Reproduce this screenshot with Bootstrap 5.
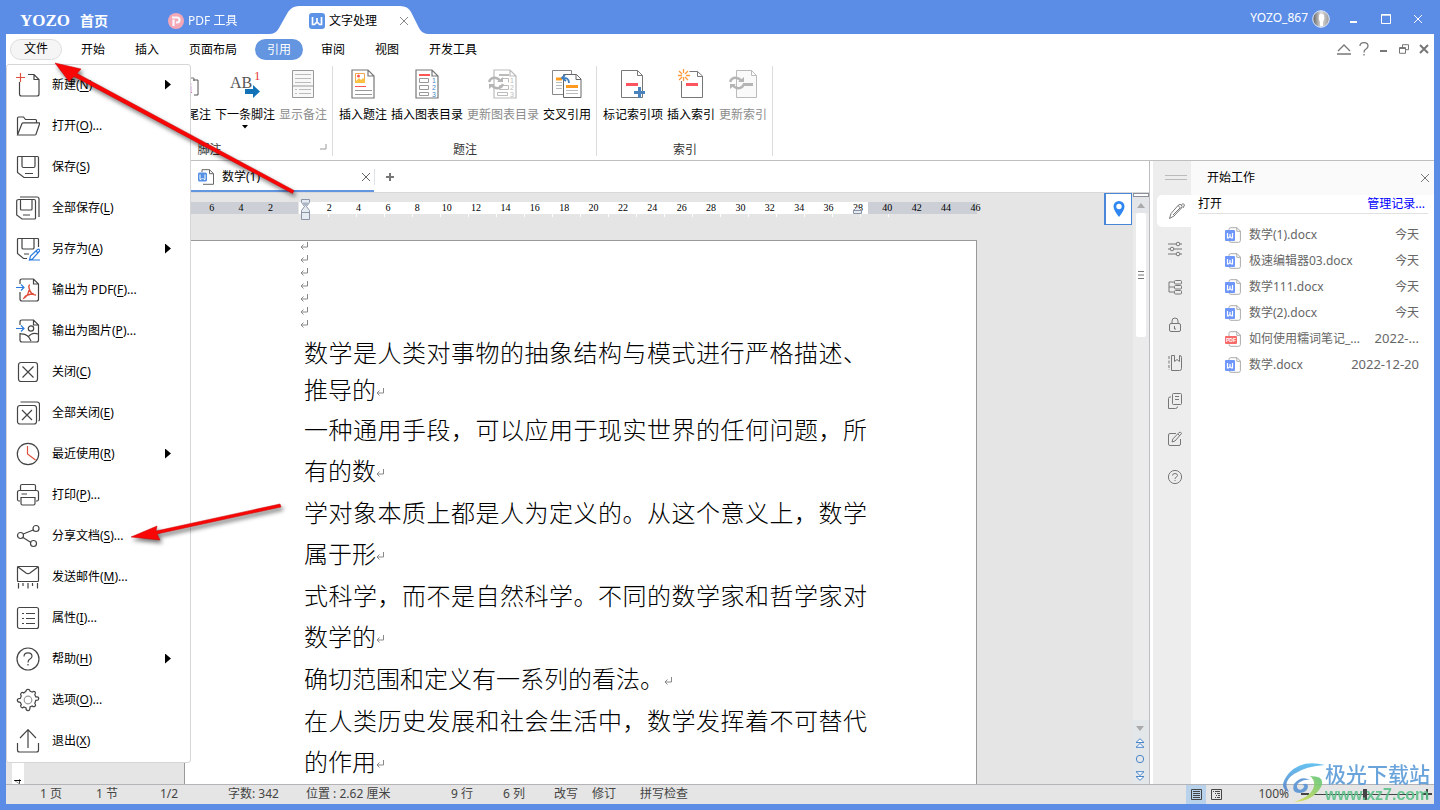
<!DOCTYPE html>
<html lang="zh-CN">
<head>
<meta charset="utf-8">
<meta name="viewport" content="width=device-width, initial-scale=1">
<title>文字处理 - YOZO</title>
<link rel="stylesheet" href="https://cdn.jsdelivr.net/npm/bootstrap@5.3.0/dist/css/bootstrap.min.css">
<script src="https://cdn.jsdelivr.net/npm/bootstrap@5.3.0/dist/js/bootstrap.bundle.min.js"></script>
<style>
  :root { --frame: #5c8de6; --accent: #6495e0; --canvas: #e5e5e5; }
  body { font: 12px/16px "Noto Sans", "Noto Sans CJK SC", sans-serif; color: #000; background: var(--frame); }
  button { font: inherit; color: inherit; background: none; border: 0; padding: 0; white-space: nowrap; }
  svg { display: block; flex: none; fill: none; stroke: currentColor; }
  .app-window { height: 100vh; padding: 0 6px 6px; }

  /* title bar */
  .title-bar { height: 34px; color: #fff; }
  .logo-text { font: bold 17px/28px "Liberation Serif", serif; margin: 7px 10px 0 14px; }
  .home-link { font-size: 14px; margin-top: 7px; width: 88px; text-align: left; }
  .pdf-link { margin-top: 7px; width: 115px; opacity: .95; }
  .app-tab { width: 140px; padding: 7px 14px 0 26px; color: #000; z-index: 0; }
  .app-tab > .tab-shape { position: absolute; left: -15px; top: 0; z-index: -1; }
  .win-btn { width: 32px; height: 34px; }
  .user-name { padding-top: 2px; }

  /* main menu */
  .menu-bar { height: 30px; padding-left: 4px; }
  .menu-tab { height: 21px; padding: 1px 12px 0; border-radius: 11px; margin-right: 6px; }
  .menu-tab.file-tab { padding: 0 13px; margin-right: 7px; background: #f5f5f5; border: 1px solid #ddd; }
  .menu-tab.current { background: var(--accent); color: #fff; }
  .tool-btn { width: 20px; height: 28px; color: #777; }

  /* ribbon */
  .ribbon { height: 97px; padding-top: 2px; border-bottom: 1px solid #bfbfbf; }
  .ribbon-group { height: 90px; border-right: 1px solid #dcdcdc; padding: 0 5px 0 6px; }
  .ribbon-group.notes { margin-left: 80px; width: 247px; }
  .ribbon-btn svg { margin: 3px auto 8px; }
  .ribbon-btn .drop-caret { margin: 2px auto 0; }
  .ribbon-btn:disabled { color: #8c8c8c; }
  .group-label { height: 12px; line-height: 12px; color: #333; }

  /* document tabs */
  .doc-tabs { height: 32px; border-bottom: 1px solid #d8d8d8; }
  .doc-tab { width: 368px; height: 31px; padding: 2px 3px 0 192px; border-bottom: 2px solid var(--accent); }
  .new-tab { padding-left: 11px; }
  .doc-area { background: var(--canvas); border-right: 1px solid #bdbdc1; }

  /* rulers and page */
  .ruler { width: 793px; height: 12px; margin: 9px 0 0 178px; background: #fff; font: 10px/12px "Liberation Serif", serif; }
  .ruler-margin { width: 109px; background: #cccfd6; }
  .ruler-margin.start { width: 115px; border-right: 1px solid var(--canvas); }
  .ruler-scale { position: absolute; inset: 0 -13px 0 13px; }
  .ruler-scale > span { flex: 1 1 0; text-align: center; }
  .indent-mark { position: absolute; top: -3px; left: 117px; }
  .indent-mark.end { left: 669px; top: 3px; }
  .ruler-ticks { height: 3px; width: 562px; margin: 0 0 23px 322px; background: repeating-linear-gradient(90deg, #fff 0 1px, transparent 1px 28px); }
  .v-ruler { width: 12px; margin: 0 160px 0 6px; background: #fff; font: 10px/12px "Liberation Serif", serif; }
  .v-ruler > span { writing-mode: vertical-rl; transform: rotate(180deg); }
  .sheet { width: 793px; background: #fff; border: 1px solid #999; border-bottom: 0; padding-left: 115px; overflow: hidden; }
  .blank-line { height: 13px; padding-top: 1px; }
  .doc-body { padding: 1px 0 0 4px; width: 567px; font: 300 24px/41px "Noto Sans CJK SC", sans-serif; }
  .doc-body p { margin: 0 0 1px; text-align: justify; }
  .doc-body p.first-para { line-height: 37px; }
  .doc-body svg { display: inline-block; }
  .pin-btn { width: 28px; height: 32px; background: #fff; border: 1px solid #4a86d8; border-left-width: 2px; margin-right: 1px; }
  .v-scroll { width: 16px; background: #ebebeb; }
  .split-box { height: 4px; border: 1px solid #8b8f99; background: #fff; }
  .scroll-end { height: 16px; background: #e3e5e9; }
  .scroll-thumb { height: 124px; width: 10px; background: #fff; border-radius: 2px; color: #777; }
  .browse-btns { background: #e4e7ea; height: 64px; padding: 5px 2px 3px 0; color: #4a86c8; }

  /* task pane */
  .pane-rail { width: 38px; margin-left: 3px; background: #ededed; color: #777; }
  .rail-grip { height: 34px; padding-left: 8px; }
  .rail-btn { height: 32px; margin: 0 0 6px 4px; padding-left: 1px; }
  .rail-btn.current { background: #fff; border-radius: 5px 0 0 5px; }
  .task-pane { width: 243px; background: #fff; }
  .pane-head { height: 34px; padding: 0 4px 0 16px; background: #fafafa; }
  .open-head { height: 19px; margin: 0 6px 8px 7px; border-bottom: 1px solid #e2e2e2; }
  .open-head a { color: #00f; text-decoration: none; padding-right: 3px; }
  .file-row { height: 26px; color: #666; text-decoration: none; padding: 0 15px 0 34px; }
  .file-row .full-date { font-size: 13px; line-height: 15px; padding-bottom: 1px; }

  /* status bar */
  .status-bar { height: 20px; background: var(--canvas); border-top: 1px solid #b3b3b8; color: #444; padding: 0 2px 1px 34px; }
  .view-btn { width: 20px; height: 19px; }
  .view-btn.current { background: #b8d2ec; }
  .zoom-range { appearance: none; width: 102px; height: 12px; margin: 0 6px 0 5px; background: linear-gradient(#444, #444) center / 100% 1px no-repeat; }
  .zoom-range::-webkit-slider-thumb { appearance: none; width: 4px; height: 11px; background: #444; }

  /* overlays */
  .file-menu { position: absolute; left: 6px; top: 64px; width: 185px; background: #fff; border: 1px solid #d6d6d6; border-radius: 3px; z-index: 5; }
  .file-menu button { height: 41px; padding: 0 19px 2px 9px; gap: 12px; }
  .file-menu svg { color: #444; stroke-width: 1.2; }
  .file-menu .fly { width: 6px; height: 10px; background: #000; clip-path: polygon(0 0, 100% 50%, 0 100%); }
  .file-menu u { text-underline-offset: 2px; }
  .guide-arrows { position: absolute; left: 0; top: 0; z-index: 6; pointer-events: none; filter: drop-shadow(2px 3px 2px rgba(0,0,0,.55)); }
  .site-stamp { position: absolute; right: 10px; bottom: 5px; z-index: 6; pointer-events: none; opacity: .9; }
  .stamp-name { font: 500 21px/24px "Noto Sans CJK SC", sans-serif; color: #5b9bd8; }
  .stamp-url { font: bold 16px/20px "Liberation Sans", sans-serif; color: #5dc08a; }
</style>
</head>
<body>
<svg width="0" height="0" class="position-absolute" aria-hidden="true">
  <symbol id="i-return" viewBox="0 0 8 8"><path d="M7.500 0v5H1M3.500 2.500 1 5l2.500 2.500" stroke="#888"/></symbol>
  <symbol id="i-close" viewBox="0 0 10 10"><path d="m1 1 8 8M9 1 1 9"/></symbol>
  <symbol id="i-page" viewBox="0 0 24 30"><path d="M1 1h16l6 6v22H1zM17 1v6h6" fill="#fff" stroke-width="1.2"/></symbol>
  <symbol id="i-doc" viewBox="0 0 16 16"><path d="M4 4V2.500Q4 .7 5.800.7H12l3.400 3.400v9.400q0 1.800-1.800 1.800H6q-2 0-2-2M11.800.7v3.600h3.600" stroke="#aaa"/><rect x="0" y="3" width="10" height="11" rx="1" fill="#6f96fa" stroke="none"/><path d="M2.500 6v5h1L5 9.500 6.500 11h1V6M5 7v3" stroke="#fff" stroke-width="1.200"/></symbol>
  <symbol id="i-sync" viewBox="0 0 16 14"><path d="M1 6Q3 1 8 2q3 .5 4 3M15 8q-2 5-7 4-3-.5-4-3" stroke="#b5b5b5" stroke-width="2.400"/><path d="M9 6h6V1zM7 8H1v5z" fill="#b5b5b5" stroke="none"/></symbol>
</svg>

<div class="app-window d-flex flex-column position-relative">

  <header class="title-bar d-flex">
    <div class="logo-text">YOZO</div>
    <button class="home-link fw-bold">首页</button>
    <button class="pdf-link d-flex align-items-center gap-1">
      <svg width="16" height="16" viewBox="0 0 16 16"><circle cx="8" cy="8" r="8" fill="#ffa9b4" stroke="none"/><path d="M5.500 6.500V13M4 4.500h5a2.500 2.500 0 0 1 0 5H8" stroke="#fff" stroke-width="2.200"/></svg>
      PDF 工具</button>
    <div class="app-tab position-relative d-flex align-items-center">
      <svg class="tab-shape" width="162" height="34" viewBox="0 0 162 34"><path d="M1 34Q8 34 11 28L20 12Q24 6 31 6H132Q140 6 143 12L151 28Q154 34 161 34z" fill="#fff" stroke="none"/></svg>
      <svg class="me-1" width="16" height="16" viewBox="0 0 16 16"><rect width="16" height="16" rx="3" fill="#5c93e6" stroke="none"/><path d="M3.500 4v7.500h2L8 9l2.500 2.500h2V4M8 5v5" stroke="#fff" stroke-width="1.700"/></svg>
      文字处理
      <button class="ms-auto" aria-label="关闭标签" style="color:#888"><svg width="10" height="10"><use href="#i-close"/></svg></button>
    </div>
    <div class="ms-auto d-flex align-items-center">
      <span class="user-name me-1">YOZO_867</span>
      <svg class="mt-1" width="18" height="18" viewBox="0 0 18 18"><defs><linearGradient id="av"><stop offset=".1" stop-color="#777"/><stop offset=".5" stop-color="#ddd"/><stop offset="1" stop-color="#999"/></linearGradient></defs><circle cx="9" cy="9" r="8.300" fill="url(#av)" stroke="#dbe6fb"/><path d="M7 5q2-3 5 0 1 4-1 7v4H8v-4Q6 9 7 5z" fill="#fff" stroke="none"/></svg>
      <div class="d-flex ps-2">
        <button class="win-btn d-flex justify-content-center align-items-center pt-1" aria-label="最小化"><svg width="12" height="12" viewBox="0 0 12 12"><path d="M2 9h7" stroke-width="2"/></svg></button>
        <button class="win-btn d-flex justify-content-center align-items-center pt-1" aria-label="最大化"><svg width="12" height="12" viewBox="0 0 12 12"><path d="M1.500 1.500h9v9h-9zM1 2.200h10"/></svg></button>
        <button class="win-btn d-flex justify-content-center align-items-center pt-1" aria-label="关闭"><svg width="10" height="10"><use href="#i-close"/></svg></button>
      </div>
    </div>
  </header>

  <nav class="menu-bar bg-white d-flex align-items-center">
    <button class="menu-tab file-tab">文件</button>
    <button class="menu-tab">开始</button>
    <button class="menu-tab">插入</button>
    <button class="menu-tab">页面布局</button>
    <button class="menu-tab current">引用</button>
    <button class="menu-tab">审阅</button>
    <button class="menu-tab">视图</button>
    <button class="menu-tab">开发工具</button>
    <div class="ms-auto d-flex">
      <button class="tool-btn d-flex justify-content-center align-items-center" aria-label="折叠功能区"><svg width="16" height="14" viewBox="0 0 16 14"><path d="M2 9 8 3l6 6M1 12h14" stroke-width="1.300"/></svg></button>
      <button class="tool-btn d-flex justify-content-center align-items-center" aria-label="帮助"><svg width="10" height="14" viewBox="0 0 10 14"><path d="M1 4q0-3.300 4-3.300T9 4q0 1.800-2 3Q5 8 5 10.500M5 12v1.500" stroke-width="1.300"/></svg></button>
      <button class="tool-btn d-flex justify-content-center align-items-center" aria-label="最小化文档"><svg width="10" height="12" viewBox="0 0 10 12"><path d="M1 8h7" stroke-width="2"/></svg></button>
      <button class="tool-btn d-flex justify-content-center align-items-center" aria-label="还原文档"><svg width="10" height="10" viewBox="0 0 10 10"><path d="M3.500 3V.7h6v5H7M.5 3.500h6v5.800h-6zM.5 4.500h6"/></svg></button>
      <button class="tool-btn d-flex justify-content-center align-items-center" aria-label="关闭文档"><svg width="10" height="10" stroke-width="2"><use href="#i-close"/></svg></button>
    </div>
  </nav>

  <section class="ribbon bg-white d-flex">
    <div class="ribbon-group notes d-flex flex-column">
      <div class="d-flex justify-content-end align-items-start gap-1 flex-grow-1">
        <button class="ribbon-btn"><svg width="32" height="30" viewBox="0 0 32 30"><path d="M14 5h5v4h4v3" stroke="#777"/><path d="M22 11h5v15h-4" stroke="#555"/><text x="17" y="24" font-family="Liberation Serif" font-size="15" font-weight="bold" fill="#e03a3a" stroke="none">i</text></svg>插入尾注</button>
        <button class="ribbon-btn"><svg width="32" height="30" viewBox="0 0 32 30"><text x="1" y="19" font-family="Liberation Serif" font-size="16" fill="#555" stroke="none">AB</text><text x="25" y="11" font-family="Liberation Serif" font-size="13" fill="#e83c3c" stroke="none">1</text><path d="M16 20h8v-4l7 6.500-7 6.500v-4h-8z" fill="#1272b8" stroke="none"/></svg>下一条脚注<svg class="drop-caret" width="6" height="4" viewBox="0 0 6 4"><path d="M0 0h6L3 3.500z" fill="#000" stroke="none"/></svg></button>
        <button class="ribbon-btn" disabled><svg width="24" height="30" viewBox="0 0 24 30"><path d="M1.500 1.500h21v27h-21zM1.500 17h21" fill="#f8f8f8" stroke="#999"/><path d="M4 5.500h16M4 9.500h16M4 13.500h16M4 20.500h2m2 0h12M4 24.500h2m2 0h12" stroke="#bbb"/></svg>显示备注</button>
      </div>
      <div class="group-label text-center position-relative">脚注<svg class="position-absolute end-0 top-0" width="8" height="6" viewBox="0 0 8 6"><path d="M1 5h6V0" stroke="#999"/></svg></div>
    </div>
    <div class="ribbon-group d-flex flex-column">
      <div class="d-flex align-items-start gap-1 flex-grow-1">
        <button class="ribbon-btn"><svg width="24" height="30" viewBox="0 0 24 30"><use href="#i-page" color="#777"/><path d="M4.500 4.500h9v9h-9z" stroke="#f0a850"/><path d="m4 13 4-4 2 2 2-2 2 2v3H4z" fill="#fbc142" stroke="none"/><circle cx="7.500" cy="7" r="1.500" fill="#f55" stroke="none"/><path d="M4 17.500h11" stroke="#f55"/><path d="M4 21.500h17M4 25.500h17" stroke="#999"/></svg>插入题注</button>
        <button class="ribbon-btn"><svg width="24" height="30" viewBox="0 0 24 30"><use href="#i-page" color="#777"/><path d="M4 6h11" stroke="#f55" stroke-width="2"/><path d="M4.500 9.500h9v4h-9zM4.500 16.500h9v4h-9zM4.500 23.500h9v3h-9z" stroke="#999"/><g font-family="Liberation Sans" font-size="7" fill="#4a8ac8" stroke="none"><text x="17" y="14">1</text><text x="17" y="21">2</text><text x="17" y="28">3</text></g></svg>插入图表目录</button>
        <button class="ribbon-btn" disabled><svg width="32" height="30" viewBox="0 0 32 30"><g transform="translate(6 0)"><use href="#i-page" width="24" height="30" color="#bbb"/><path d="M6 6h10" stroke="#bbb" stroke-width="2"/><path d="M8.500 9.500h7v4M6.500 16.500h9v4h-9zM4.500 23.500h10v3h-10z" stroke="#bbb"/><g font-family="Liberation Sans" font-size="7" fill="#bbb" stroke="none"><text x="17" y="14">1</text><text x="17" y="21">2</text><text x="17" y="28">3</text></g></g><use href="#i-sync" x="1" y="7" width="16" height="14"/></svg>更新图表目录</button>
        <button class="ribbon-btn"><svg width="32" height="30" viewBox="0 0 32 30"><path d="M1.500 1.500h19v24h-19z" fill="#fff" stroke="#888"/><path d="M5 10h6" stroke="#ff9a1c" stroke-width="3"/><path d="M5 13.500h6M5 16.500h6M5 19.500h6" stroke="#bbb"/><path d="M12.500 5.500h13l4.500 4.500v18.500H12.500zM25 5.500v5h5" fill="#fff" stroke="#666"/><path d="M15 17.500h12" stroke="#ff9a1c" stroke-width="3"/><path d="M15 21.500h12M15 24.500h12" stroke="#bbb"/><path d="M11 9q7-1 7 5M14 6l-3 3 4 3" stroke="#3f7fc0" stroke-width="1.800"/></svg>交叉引用</button>
      </div>
      <div class="group-label text-center">题注</div>
    </div>
    <div class="ribbon-group d-flex flex-column">
      <div class="d-flex align-items-start gap-1 flex-grow-1">
        <button class="ribbon-btn"><svg width="26" height="30" viewBox="0 0 26 30"><path d="M1.500 1.500h16l5 5v22h-21zM17.500 1.500v5h5" fill="#fff" stroke="#777"/><path d="M6 15.500h12" stroke="#fc5560" stroke-width="3"/><path d="M14 23.500h11M19.500 18v11" stroke="#4a82bd" stroke-width="3"/></svg>标记索引项</button>
        <button class="ribbon-btn"><svg width="28" height="30" viewBox="0 0 28 30"><path d="M4.500 12v16.500h21V7l-5-4.500h-8M20.500 2.500v5h5" stroke="#777"/><path d="M9 15.500h12" stroke="#fc5560" stroke-width="3"/><path d="M6.500 0v4m0 4v4M1 6.500h4m4 0h4M2 2l3 3m3 3 3 3M11 2 8 5M5 8l-3 3" stroke="#ff9a3c" stroke-width="1.300"/></svg>插入索引</button>
        <button class="ribbon-btn" disabled><svg width="28" height="30" viewBox="0 0 28 30"><path d="M7.500 1.500h15l5 5v22h-20zM22.500 1.500v5h5" fill="#fafafa" stroke="#bbb"/><path d="M14 15.500h10" stroke="#b5b5b5" stroke-width="3"/><use href="#i-sync" x="0" y="7" width="16" height="14"/></svg>更新索引</button>
      </div>
      <div class="group-label text-center">索引</div>
    </div>
  </section>

  <main class="d-flex flex-grow-1 bg-white overflow-hidden">
    <div class="doc-area d-flex flex-column flex-grow-1 overflow-hidden">
      <div class="doc-tabs d-flex align-items-center bg-white">
        <div class="doc-tab d-flex align-items-center">
          <svg class="me-2" width="16" height="16" viewBox="0 0 16 16"><path d="M4 3V.7h7.500l4 4v10.600H5M11.500.7v4h4" stroke="#666"/><rect y="3.500" width="9" height="9" rx="1.500" fill="#5590e4" stroke="none"/><path d="M2 5.500v5h1L4.500 9 6 10.500h1v-5" stroke="#fff"/></svg>
          数学(1)
          <button class="ms-auto" aria-label="关闭文档标签" style="color:#666"><svg width="10" height="10"><use href="#i-close"/></svg></button>
        </div>
        <button class="new-tab border-start" aria-label="新建标签"><svg width="8" height="16" viewBox="0 0 8 16"><path d="M0 8h8M4 4v8" stroke="#777" stroke-width="2"/></svg></button>
      </div>
      <div class="d-flex flex-grow-1 overflow-hidden">
        <div class="d-flex flex-column flex-grow-1 overflow-hidden">
          <div class="ruler position-relative d-flex flex-shrink-0 justify-content-between">
            <div class="ruler-margin start"></div>
            <div class="ruler-margin"></div>
            <div class="ruler-scale d-flex"><span>6</span><span>4</span><span>2</span><span></span><span>2</span><span>4</span><span>6</span><span>8</span><span>10</span><span>12</span><span>14</span><span>16</span><span>18</span><span>20</span><span>22</span><span>24</span><span>26</span><span>28</span><span>30</span><span>32</span><span>34</span><span>36</span><span>38</span><span>40</span><span>42</span><span>44</span><span>46</span></div>
            <svg class="indent-mark" width="10" height="22" viewBox="0 0 10 22"><path d="M.5.500h8v3l-3 4 3 4v9h-8v-9l3-4-3-4zM.5 13.500h8" fill="#e6ebf2" stroke="#8a94a6"/><path d="M1 3.500h7l-3.500 4z" fill="#aab4c4" stroke="none"/></svg>
            <svg class="indent-mark end" width="10" height="9" viewBox="0 0 10 9"><path d="M.5 8.500v-3l4-4 4 4v3zM.5 5.500h8" fill="#e6ebf2" stroke="#8a94a6"/></svg>
          </div>
          <div class="ruler-ticks flex-shrink-0"></div>
          <div class="d-flex flex-grow-1 overflow-hidden">
            <div class="v-ruler flex-shrink-0 d-flex align-items-end"><span>4</span></div>
            <article class="sheet flex-shrink-0">
              <div class="blank-line"><svg width="8" height="8"><use href="#i-return"/></svg></div>
              <div class="blank-line"><svg width="8" height="8"><use href="#i-return"/></svg></div>
              <div class="blank-line"><svg width="8" height="8"><use href="#i-return"/></svg></div>
              <div class="blank-line"><svg width="8" height="8"><use href="#i-return"/></svg></div>
              <div class="blank-line"><svg width="8" height="8"><use href="#i-return"/></svg></div>
              <div class="blank-line"><svg width="8" height="8"><use href="#i-return"/></svg></div>
              <div class="blank-line"><svg width="8" height="8"><use href="#i-return"/></svg></div>
              <div class="doc-body">
                <p class="first-para">数学是人类对事物的抽象结构与模式进行严格描述、推导的<svg width="8" height="8"><use href="#i-return"/></svg></p>
                <p>一种通用手段，可以应用于现实世界的任何问题，所有的数<svg width="8" height="8"><use href="#i-return"/></svg></p>
                <p>学对象本质上都是人为定义的。从这个意义上，数学属于形<svg width="8" height="8"><use href="#i-return"/></svg></p>
                <p>式科学，而不是自然科学。不同的数学家和哲学家对数学的<svg width="8" height="8"><use href="#i-return"/></svg></p>
                <p>确切范围和定义有一系列的看法。<svg width="8" height="8"><use href="#i-return"/></svg></p>
                <p>在人类历史发展和社会生活中，数学发挥着不可替代的作用<svg width="8" height="8"><use href="#i-return"/></svg></p>
              </div>
            </article>
          </div>
        </div>
        <button class="pin-btn flex-shrink-0 d-flex justify-content-center align-items-center" aria-label="定位"><svg width="12" height="16" viewBox="0 0 12 16"><path d="M6 0a5.500 5.500 0 0 1 5.500 5.500Q11.500 9 6 16 .5 9 .5 5.500A5.500 5.500 0 0 1 6 0z" fill="#2f86f0" stroke="none"/><circle cx="6" cy="5.500" r="2.700" fill="#fff" stroke="none"/></svg></button>
        <div class="v-scroll flex-shrink-0 d-flex flex-column align-items-stretch">
          <div class="split-box"></div>
          <div class="scroll-end d-flex justify-content-center align-items-center"><svg width="8" height="5" viewBox="0 0 8 5"><path d="M0 5h8L4 0z" fill="#aaa" stroke="none"/></svg></div>
          <div class="scroll-thumb mx-auto d-flex justify-content-center align-items-center"><svg width="6" height="8" viewBox="0 0 6 8"><path d="M0 .5h6M0 4h6M0 7.500h6"/></svg></div>
          <div class="browse-btns mt-auto d-flex flex-column align-items-center justify-content-between">
            <svg width="8" height="6" viewBox="0 0 8 6"><path d="M0 1h8L4 6z" fill="#aaa" stroke="none"/></svg>
            <svg width="10" height="10" viewBox="0 0 10 10"><path d="M1 4.500 5 .7l4 3.800zM1 9.300l4-3.800 4 3.800z" fill="#fff"/></svg>
            <svg width="10" height="10" viewBox="0 0 10 10"><circle cx="5" cy="5" r="3.700"/></svg>
            <svg width="10" height="10" viewBox="0 0 10 10"><path d="m1 .7 4 3.800L9 .7zM1 5.500l4 3.800 4-3.800z" fill="#fff"/></svg>
          </div>
        </div>
      </div>
    </div>

    <nav class="pane-rail flex-shrink-0 d-flex flex-column">
      <div class="rail-grip d-flex justify-content-center align-items-center"><svg width="22" height="6" viewBox="0 0 22 6"><path d="M0 .5h22M0 4.500h22" stroke="#bbb"/></svg></div>
      <button class="rail-btn current d-flex justify-content-center align-items-center" aria-label="开始工作"><svg class="ms-1" width="18" height="18" viewBox="0 0 18 18"><path d="m1.500 16.500 1.500-5 7-8q2-2 3.500-.5t-.5 3.500l-7 7.500zM10 3.500l3 3M5 13l7-7M13.500 3l1.500-1.500 1.500 1.500-1.500 3" /></svg></button>
      <button class="rail-btn d-flex justify-content-center align-items-center" aria-label="属性设置"><svg width="16" height="16" viewBox="0 0 16 16"><path d="M1 3h8m4 0h2M1 8h2m4 0h8M1 13h8m4 0h2"/><circle cx="11" cy="3" r="1.800"/><circle cx="5" cy="8" r="1.800"/><circle cx="11" cy="13" r="1.800"/></svg></button>
      <button class="rail-btn d-flex justify-content-center align-items-center" aria-label="结构"><svg width="16" height="16" viewBox="0 0 16 16"><rect x="7.500" y="1.500" width="7" height="3.500" rx="1"/><rect x="7.500" y="6.500" width="7" height="3.500" rx="1"/><rect x="7.500" y="11.500" width="7" height="3.500" rx="1"/><path d="M7 3H2v10h5M2 8h5"/></svg></button>
      <button class="rail-btn d-flex justify-content-center align-items-center" aria-label="保护"><svg width="16" height="16" viewBox="0 0 16 16"><rect x="2.500" y="6.500" width="11" height="8" rx="1.500"/><path d="M5 6V4q0-3 3-3t3 3v2M7.500 9v3H9"/></svg></button>
      <button class="rail-btn d-flex justify-content-center align-items-center" aria-label="书签"><svg width="16" height="18" viewBox="0 0 16 18"><path d="M2 2v14" stroke-dasharray="3 1.500"/><path d="M7.500 1.500h-3v15h8q2 0 2-2v-11q0-2-2-2M7.500 1.500v6l2.500-2 2.500 2v-6"/></svg></button>
      <button class="rail-btn d-flex justify-content-center align-items-center" aria-label="剪贴板"><svg width="16" height="18" viewBox="0 0 16 18"><rect x="5.500" y="1.500" width="9" height="11" rx="1"/><path d="M8 4.500h4M8 7.500h4M4 5H3q-1.500 0-1.500 1.500v10h7q2 0 2-2"/></svg></button>
      <button class="rail-btn d-flex justify-content-center align-items-center" aria-label="编辑"><svg width="16" height="16" viewBox="0 0 16 16"><path d="M9 2.500H3Q1.500 2.500 1.500 4v9q0 1.500 1.500 1.500h9q1.500 0 1.500-1.500V8M5 11l.8-3L12 1.500q2-1 2.500 1L8 10zM11 3l2 2"/></svg></button>
      <button class="rail-btn d-flex justify-content-center align-items-center" aria-label="帮助面板"><svg width="16" height="16" viewBox="0 0 16 16"><circle cx="8" cy="8" r="6.600"/><path d="M5.500 6.500q0-2 2.500-2t2.500 2q0 1-1.500 1.700-1 .5-1 1.800M8 11v1"/></svg></button>
    </nav>

    <aside class="task-pane flex-shrink-0">
      <div class="pane-head d-flex align-items-center justify-content-between">开始工作
        <button aria-label="关闭面板" style="color:#777"><svg width="10" height="10"><use href="#i-close"/></svg></button></div>
      <div class="open-head d-flex align-items-center justify-content-between"><span>打开</span><a href="#">管理记录...</a></div>
      <a href="#" class="file-row d-flex align-items-center gap-2"><svg width="16" height="16"><use href="#i-doc"/></svg><span>数学(1).docx</span><span class="ms-auto">今天</span></a>
      <a href="#" class="file-row d-flex align-items-center gap-2"><svg width="16" height="16"><use href="#i-doc"/></svg><span>极速编辑器03.docx</span><span class="ms-auto">今天</span></a>
      <a href="#" class="file-row d-flex align-items-center gap-2"><svg width="16" height="16"><use href="#i-doc"/></svg><span>数学111.docx</span><span class="ms-auto">今天</span></a>
      <a href="#" class="file-row d-flex align-items-center gap-2"><svg width="16" height="16"><use href="#i-doc"/></svg><span>数学(2).docx</span><span class="ms-auto">今天</span></a>
      <a href="#" class="file-row d-flex align-items-center gap-2"><svg width="16" height="16" viewBox="0 0 16 16"><path d="M4 5V2.500Q4 .7 5.800.7H12l3.400 3.400v9.400q0 1.800-1.800 1.800H6q-2 0-2-2M11.800.7v3.600h3.600" stroke="#aaa"/><rect y="5" width="12" height="8" rx="1" fill="#f66a6a" stroke="none"/><text x="1" y="11" font-family="Liberation Sans" font-size="5" font-weight="bold" fill="#fff" stroke="none">PDF</text></svg><span>如何使用糯词笔记_...</span><span class="ms-auto full-date">2022-...</span></a>
      <a href="#" class="file-row d-flex align-items-center gap-2"><svg width="16" height="16"><use href="#i-doc"/></svg><span>数学.docx</span><span class="ms-auto full-date">2022-12-20</span></a>
    </aside>
  </main>

  <footer class="status-bar d-flex align-items-center">
    <span style="width:56px">1 页</span><span style="width:64px">1 节</span><span style="width:68px">1/2</span><span style="width:78px">字数: 342</span><span style="width:145px">位置 : 2.62 厘米</span><span style="width:52px">9 行</span><span style="width:51px">6 列</span><span style="width:38px">改写</span><span style="width:48px">修订</span><span>拼写检查</span>
    <div class="ms-auto d-flex align-items-center">
      <button class="view-btn current d-flex justify-content-center align-items-center" aria-label="页面视图"><svg width="11" height="11" viewBox="0 0 11 11"><path d="M.5.500h10v10H.5zM2 2.500h7M2 4.500h7M2 6.500h7M2 8.500h7"/></svg></button>
      <button class="view-btn d-flex justify-content-center align-items-center me-4" aria-label="大纲视图"><svg width="11" height="11" viewBox="0 0 11 11"><path d="M.5.500h10v10H.5zM2 2.500h1m1 0h5M4 4.500h1m1 0h3M5 6.500h1m1 0h2M4 8.500h1m1 0h3"/></svg></button>
      <label for="zoom" class="ms-2">100%</label>
      <button class="ms-2" aria-label="缩小"><svg class="ms-1" width="8" height="10" viewBox="0 0 8 10"><path d="M0 5h8" stroke-width="2"/></svg></button>
      <input id="zoom" class="zoom-range" type="range" min="0" max="200" value="100">
      <button aria-label="放大"><svg width="10" height="10" viewBox="0 0 10 10"><path d="M0 5h10M5 0v10" stroke-width="2"/></svg></button>
    </div>
  </footer>

  <div class="file-menu" role="menu">
    <button class="d-flex align-items-center w-100" role="menuitem"><svg width="24" height="24" viewBox="0 0 24 24"><path d="M12 1.500h6l5 5V21q0 2-2 2H5.500q-2 0-2-2V9M18 1.500v5h5"/><path d="M4.500 0v9M0 4.500h9" stroke="#e0503c"/></svg><span>新建(<u>N</u>)</span><span class="fly ms-auto"></span></button>
    <button class="d-flex align-items-center w-100" role="menuitem"><svg width="24" height="24" viewBox="0 0 24 24"><path d="M1.500 20V4q0-1 1-1h5l2 2.500h10q1 0 1 1V9M1.500 21 6 9.500q.4-.7 1.200-.7H23q1 0 .6 1L20 20.300q-.3.700-1 .7z"/></svg><span>打开(<u>O</u>)...</span></button>
    <button class="d-flex align-items-center w-100" role="menuitem"><svg width="24" height="24" viewBox="0 0 24 24"><path d="M2.500 1.500h19q1 0 1 1v19q0 1-1 1H8l-6.500-5v-15q0-1 1-1zM6 1.500V11q0 1.500 1.500 1.500h10q1.500 0 1.500-1.500V1.500M9 18.500h8"/></svg><span>保存(<u>S</u>)</span></button>
    <button class="d-flex align-items-center w-100" role="menuitem"><svg width="24" height="24" viewBox="0 0 24 24"><path d="M3 3.500h15q1.500 0 1.500 1.500v17q0 1-1 1H6L.7 19V5Q.7 3.500 3 3.500zM4.500 3.500V13q0 1 1 1H15q1 0 1-1V3.500M7 19h7M4 1h17q2 0 2 2v18"/></svg><span>全部保存(<u>L</u>)</span></button>
    <button class="d-flex align-items-center w-100" role="menuitem"><svg width="24" height="24" viewBox="0 0 24 24"><path d="M22.500 10V2.500q0-1-1-1h-19q-1 0-1 1v14l6 5H11M6 1.500V11q0 1 1.500 1h9q1.500 0 1.500-1V1.500M8 17h5"/><path d="m13.500 23 1-4 7-6.500q1.500-1 2.500 1L16.500 22zM20 14l2 2M14 23h10" stroke="#2a7ae0"/></svg><span>另存为(<u>A</u>)</span><span class="fly ms-auto"></span></button>
    <button class="d-flex align-items-center w-100" role="menuitem"><svg width="24" height="24" viewBox="0 0 24 24"><path d="M4 6V3q0-2 2-2h11.500l5 5v15q0 2-2 2H6q-2 0-2-2v-7M17.500 1v5h5"/><path d="M0 9.500h8M5 6.500l3 3-3 3" stroke="#2a7ae0"/><path d="M14 7q-2 0-.7 4Q15 17 20 17M13 12q-1 6-5 8 2-4 10-4" stroke="#e0503c" stroke-width="1.400"/></svg><span>输出为 PDF(<u>F</u>)...</span></button>
    <button class="d-flex align-items-center w-100" role="menuitem"><svg width="24" height="24" viewBox="0 0 24 24"><path d="M4 6V3q0-2 2-2h11.500l5 5v15q0 2-2 2H6q-2 0-2-2v-7M17.500 1v5h5M4 15q8-1 11 7M12 18q4-5 10-3"/><circle cx="15" cy="9.500" r="2.700"/><path d="M0 9.500h8M5 6.500l3 3-3 3" stroke="#2a7ae0"/></svg><span>输出为图片(<u>P</u>)...</span></button>
    <button class="d-flex align-items-center w-100" role="menuitem"><svg width="24" height="24" viewBox="0 0 24 24"><rect x="2.500" y="2.500" width="19" height="19" rx="2.500"/><path d="m6.500 6.500 11 11m0-11-11 11"/></svg><span>关闭(<u>C</u>)</span></button>
    <button class="d-flex align-items-center w-100" role="menuitem"><svg width="24" height="24" viewBox="0 0 24 24"><rect x="1.500" y="4.500" width="19" height="18.500" rx="2.500"/><path d="m6 9 10 10M16 9 6 19M4.500 1h16.500q2.500 0 2.500 2.500V18q0 1.500-1 2"/></svg><span>全部关闭(<u>E</u>)</span></button>
    <button class="d-flex align-items-center w-100" role="menuitem"><svg width="24" height="24" viewBox="0 0 24 24"><circle cx="12" cy="12" r="10.700"/><path d="M11.500 4v8l8 6" stroke="#e0503c"/></svg><span>最近使用(<u>R</u>)</span><span class="fly ms-auto"></span></button>
    <button class="d-flex align-items-center w-100" role="menuitem"><svg width="24" height="24" viewBox="0 0 24 24"><path d="M4.500 7V3q0-1.500 1.500-1.500h12q1.500 0 1.500 1.500v4M4 18H3q-1.500 0-1.500-1.500v-7Q1.500 7.500 3.500 7.500h17q2 0 2 2v7Q22.500 18 21 18h-1M5 14.500h14v6q0 1.500-1.500 1.500h-11Q5 22 5 20.500zM5.500 11H11"/></svg><span>打印(<u>P</u>)...</span></button>
    <button class="d-flex align-items-center w-100" role="menuitem"><svg width="24" height="24" viewBox="0 0 24 24"><circle cx="4.500" cy="11.500" r="3"/><circle cx="20" cy="4.500" r="3"/><circle cx="17.500" cy="19.500" r="3"/><path d="m7.200 10 10-4M7 13.500l8 5"/></svg><span>分享文档(<u>S</u>)...</span></button>
    <button class="d-flex align-items-center w-100" role="menuitem"><svg width="24" height="24" viewBox="0 0 24 24"><path d="M2.500 1.500h19q1 0 1 1v13q0 1-1 1h-19q-1 0-1-1v-13q0-1 1-1zM2 2l8 6q2 1.400 4 0l8-6M2.500 18v5.500M7 18v3M12 18v5.500M16.500 18v3M21.500 18v5.500"/></svg><span>发送邮件(<u>M</u>)...</span></button>
    <button class="d-flex align-items-center w-100" role="menuitem"><svg width="24" height="24" viewBox="0 0 24 24"><rect x="1.500" y="1.500" width="21" height="21" rx="2"/><path d="M6 7.500h2m2 0h9M6 12.500h2m2 0h9M6 17.500h2m2 0h9"/></svg><span>属性(<u>I</u>)...</span></button>
    <button class="d-flex align-items-center w-100" role="menuitem"><svg width="24" height="24" viewBox="0 0 24 24"><circle cx="12" cy="12" r="11"/><path d="M8 9.500q0-3.700 4-3.700t4 3.500q0 1.700-2 2.700-2 1-2 3.500M12 17v1.500"/></svg><span>帮助(<u>H</u>)</span><span class="fly ms-auto"></span></button>
    <button class="d-flex align-items-center w-100" role="menuitem"><svg width="24" height="24" viewBox="0 0 24 24"><path d="M10 3.200Q10 1.300 12 1.300t2 1.900l2.200.9q1.500-1.400 2.700-.3t-.1 2.900l1 2.200q2.900-.3 2.900 1.600t-2.900 1.800l-1 3.200q1.400 1.800.1 2.800t-2.700-.3l-2.200 1Q14 22.700 12 22.700t-2-2.700l-2.200-1q-1.500 1.400-2.700.2t.2-2.700l-1-2.200q-3-.1-3-2t3-1.900l1-2.500q-1.400-1.600-.2-2.800t2.700-.1z"/><circle cx="12" cy="12" r="3.800" stroke="#999"/></svg><span>选项(<u>O</u>)...</span></button>
    <button class="d-flex align-items-center w-100" role="menuitem"><svg width="24" height="24" viewBox="0 0 24 24"><path d="M1.500 14v7q0 2 2 2h17q2 0 2-2v-7M12 19V1M4 9l8-8.300L20 9"/></svg><span>退出(<u>X</u>)</span></button>
  </div>

  <svg class="guide-arrows" width="310" height="560" viewBox="0 0 310 560" aria-hidden="true">
    <g fill="#f90606" stroke="#c80000" stroke-width=".5"><path d="m55 63 26 6-4 4.500 217 117-1.500 3L74 76.500l-5 5z"/><path d="m131 537 26-11-1 5 124-27 1 3-124 27 3 6z"/></g>
  </svg>

  <div class="site-stamp d-flex align-items-center" aria-hidden="true">
    <svg width="43" height="42" viewBox="0 0 43 42"><defs><linearGradient id="sw" x2="0" y2="1"><stop stop-color="#55bdf0"/><stop offset="1" stop-color="#5a80c8"/></linearGradient><linearGradient id="sg" x1="1" x2="0" y2="1"><stop stop-color="#5cc47a"/><stop offset="1" stop-color="#e0e050"/></linearGradient></defs><g stroke="none"><path d="M43 3Q20-3 7 11-5 26 7 30 0 20 12 12 24 4 43 3z" fill="url(#sw)"/><path d="M28 14q16 0 11 11-8 14-27 15 18-6 20-16 1-6-4-10z" fill="url(#sg)"/><path d="M28 18q-9-5-16 4-3 9 6 9 8-1 8-7-1-4-6-1 3 0 2 2-2 4-6 2-3-4 2-7 5-3 10-2z" fill="#5a94d4"/></g></svg>
    <div><div class="stamp-name">极光下载站</div><div class="stamp-url">www.xz7.com</div></div>
  </div>
</div>
</body>
</html>
